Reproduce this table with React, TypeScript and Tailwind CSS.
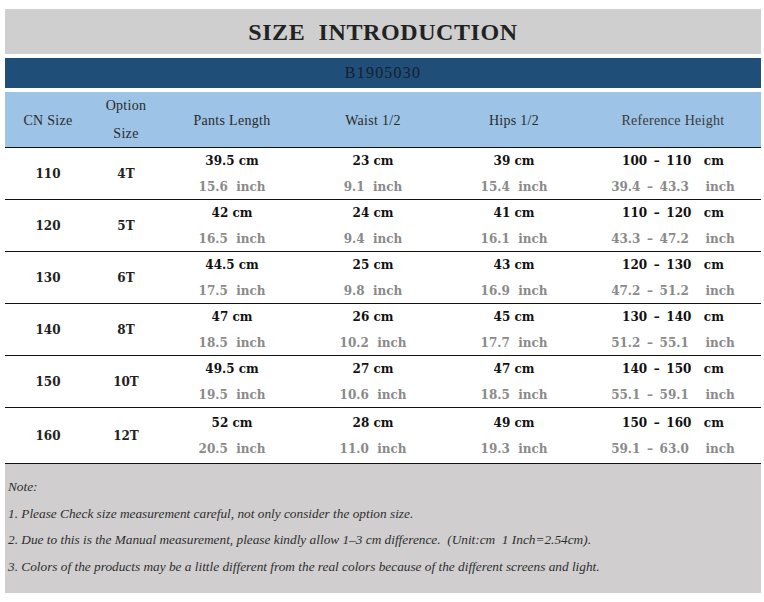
import React from "react"

type Row = {
  cn: string
  opt: string
  cells: [string, string][]
}

const rng = (a: string, b: string, unit: string, pad: string) => `${a}\u2009 – \u2009${b}${pad}${unit}`

const CM = "   "
const IN = "    "

const rows: Row[] = [
  { cn: "110", opt: "4T", cells: [["39.5 cm", "15.6  inch"], ["23 cm", "9.1  inch"], ["39 cm", "15.4  inch"], [rng("100", "110", "cm", CM), rng("39.4", "43.3", "inch", IN)]] },
  { cn: "120", opt: "5T", cells: [["42 cm", "16.5  inch"], ["24 cm", "9.4  inch"], ["41 cm", "16.1  inch"], [rng("110", "120", "cm", CM), rng("43.3", "47.2", "inch", IN)]] },
  { cn: "130", opt: "6T", cells: [["44.5 cm", "17.5  inch"], ["25 cm", "9.8  inch"], ["43 cm", "16.9  inch"], [rng("120", "130", "cm", CM), rng("47.2", "51.2", "inch", IN)]] },
  { cn: "140", opt: "8T", cells: [["47 cm", "18.5  inch"], ["26 cm", "10.2  inch"], ["45 cm", "17.7  inch"], [rng("130", "140", "cm", CM), rng("51.2", "55.1", "inch", IN)]] },
  { cn: "150", opt: "10T", cells: [["49.5 cm", "19.5  inch"], ["27 cm", "10.6  inch"], ["47 cm", "18.5  inch"], [rng("140", "150", "cm", CM), rng("55.1", "59.1", "inch", IN)]] },
  { cn: "160", opt: "12T", cells: [["52 cm", "20.5  inch"], ["28 cm", "11.0  inch"], ["49 cm", "19.3  inch"], [rng("150", "160", "cm", CM), rng("59.1", "63.0", "inch", IN)]] },
]

const grid = "grid grid-cols-[86px_70px_142px_140px_142px_176px]"

export default function App() {
  return (
    <div className="w-[764px] h-[602px] bg-white pt-[9px] pl-[5px]" style={{ fontFamily: "'Liberation Serif', serif" }}>
      <div className="w-[756px]">
        {/* title */}
        <div className="h-[45px] bg-[#d0cfd0] flex items-center justify-center">
          <span className="text-[24px] font-semibold tracking-[0.6px] text-[#222] whitespace-pre">SIZE  INTRODUCTION</span>
        </div>
        <div className="h-[4px]" />
        <div className="h-[30px] bg-[#1f4e79] flex items-center justify-center">
          <span className="text-[16px] text-[#16202c] tracking-[1.2px]">B1905030</span>
        </div>
        <div className="h-[4px]" />

        {/* header */}
        <div className={`${grid} h-[56px] bg-[#9dc3e6] border-b border-[#111] text-[14px] tracking-[0.3px] text-[#2a2a2a]`}>
          <div className="flex items-center justify-center">CN Size</div>
          <div className="flex flex-col items-center justify-center leading-[28px]">
            <span>Option</span>
            <span>Size</span>
          </div>
          <div className="flex items-center justify-center">Pants Length</div>
          <div className="flex items-center justify-center">Waist 1/2</div>
          <div className="flex items-center justify-center">Hips 1/2</div>
          <div className="flex items-center justify-center text-[#3a3a3a]">Reference Height</div>
        </div>

        {/* rows */}
        {rows.map((r, i) => (
          <div
            key={r.cn}
            className={`${grid} ${i === rows.length - 1 ? "h-[56px]" : "h-[52px]"} border-b border-[#111]`}
            style={{ fontFamily: "'DejaVu Serif', serif" }}
          >
            <div className="flex items-center justify-center text-[12px] font-bold text-[#222]">{r.cn}</div>
            <div className="flex items-center justify-center text-[12px] font-bold text-[#222]">{r.opt}</div>
            {r.cells.map(([cm, inch], j) => (
              <div key={j} className="flex flex-col items-center justify-center text-[12px] font-bold leading-[26px] whitespace-pre">
                <span className="text-[#111]">{cm}</span>
                <span className="text-[#8a8a8a]">{inch}</span>
              </div>
            ))}
          </div>
        ))}

        {/* notes */}
        <div className="h-[129px] bg-[#d0cecf] pl-[3px] pt-[10px] italic text-[13.3px] text-[#2e2e2e] leading-[26.7px]">
          <p>Note:</p>
          <p>1. Please Check size measurement careful, not only consider the option size.</p>
          <p className="whitespace-pre">2. Due to this is the Manual measurement, please kindly allow 1–3 cm difference.  (Unit:cm  1 Inch=2.54cm).</p>
          <p>3. Colors of the products may be a little different from the real colors because of the different screens and light.</p>
        </div>
      </div>
    </div>
  )
}
